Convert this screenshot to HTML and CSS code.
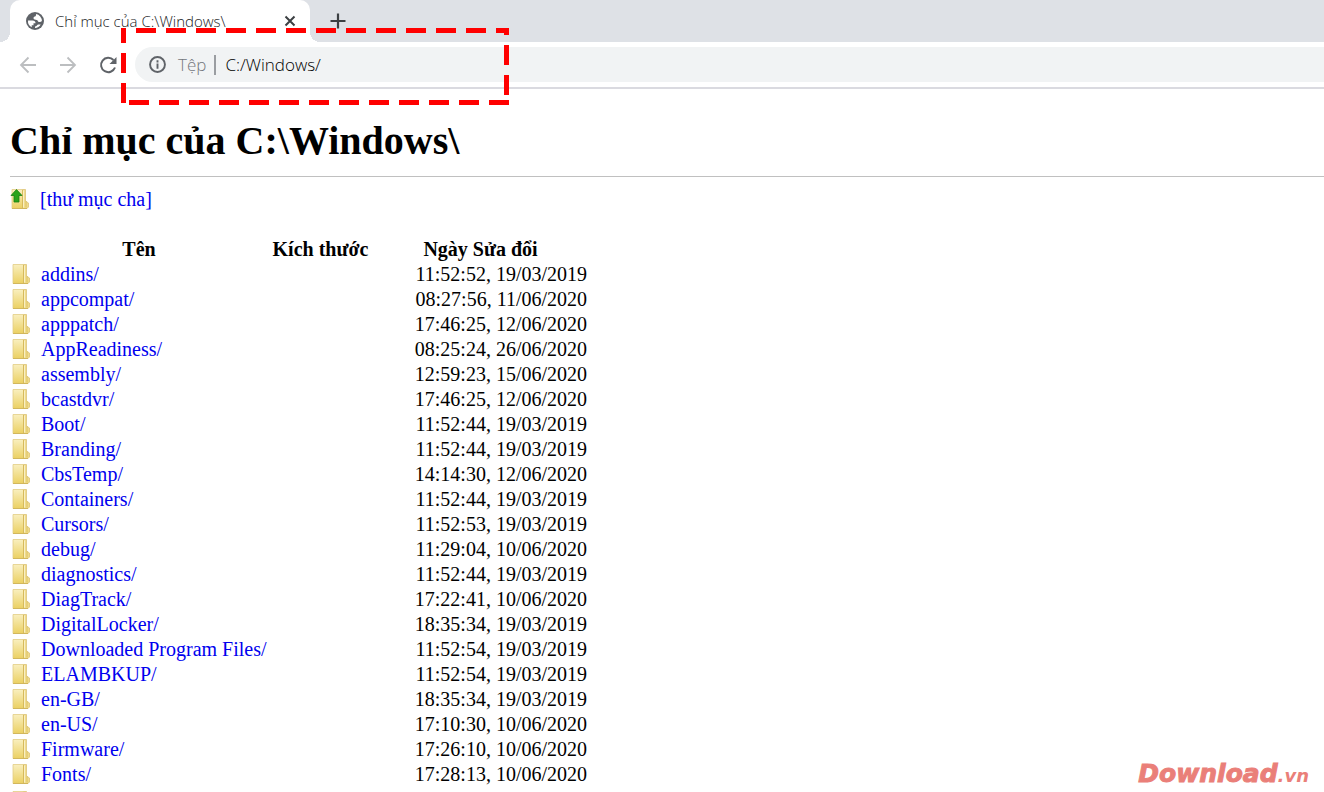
FILE: index.html
```html
<!DOCTYPE html>
<html lang="vi">
<head>
<meta charset="utf-8">
<title>Chỉ mục của C:\Windows\</title>
<link rel="stylesheet" href="styles.css">
</head>
<body>
<svg class="defs" aria-hidden="true">
  <defs>
    <linearGradient id="gold" x1="0" y1="0" x2="0" y2="1">
      <stop offset="0" stop-color="#f9efbf"/>
      <stop offset="1" stop-color="#ebd062"/>
    </linearGradient>
    <symbol id="folder" viewBox="0 0 20 20">
      <path d="M12 .5h3.500V12l3 2V18l-1.500 1.500H12z" fill="#f0dc8c" stroke="#dcc377" stroke-width=".8"/>
      <path d="M2 .5h10.500v19H2z" fill="url(#gold)" stroke="#e2cd85" stroke-width=".8"/>
      <path d="M12.500 1v18" stroke="#d6ba5c" fill="none"/>
      <path d="M13.500 1.500v17" stroke="#f9efc4" fill="none"/>
      <path d="M16 12v6.500" stroke="#d6ba5c" stroke-width=".8" fill="none"/>
      <path d="M2 19.500h15" stroke="#cdb052" stroke-width=".8"/>
    </symbol>
  </defs>
</svg>
<div class="browser">
  <header class="chrome">
    <div class="tabs">
      <div class="tab">
        <svg class="globe" viewBox="0 0 18 18" aria-hidden="true">
          <circle cx="9" cy="9" r="9" fill="#5f6368"/>
          <path d="M2 8.500h4.500c2 0 3 1 3 2.800h-2v2h-1.800V15.300A7 7 0 0 1 2 8.500zM10 2.100a7 7 0 0 1 5.900 6.900c-.7 1-2 1.300-3.200.9-1-.4-1-1.700-1.900-1.900-1.500-.2-3.300-.2-3.300-1.700 0-1.600 1.200-1.500 2-2 .6-.5.500-1.400.5-2.200zM9 16v-1.500c1.500-.3 2-1.300 3-2h2.700C13.500 14.700 11.500 16 9 16z" fill="#fff"/>
        </svg>
        <span class="tab-title">Chỉ mục của C:\Windows\</span>
        <button class="close" aria-label="Đóng"><svg viewBox="0 0 12 12"><path d="M1.500 1.500l9 9m0-9l-9 9" stroke="#3c4043" stroke-width="2"/></svg></button>
      </div>
      <button class="new-tab" aria-label="Thẻ mới"><svg viewBox="0 0 16 16"><path d="M8 .5v15M.5 8h15" stroke="#3c4043" stroke-width="2.200"/></svg></button>
    </div>
    <div class="toolbar">
      <button class="nav" aria-label="Quay lại" disabled><svg viewBox="0 0 18 18"><path d="M17 9H2m7.500-7.500L2 9l7.500 7.500" fill="none" stroke="#bcbec0" stroke-width="1.800"/></svg></button>
      <button class="nav" aria-label="Tiến" disabled><svg viewBox="0 0 18 18"><path d="M1 9h15M8.500 1.500L16 9l-7.500 7.500" fill="none" stroke="#bcbec0" stroke-width="1.800"/></svg></button>
      <button class="nav" aria-label="Tải lại"><svg viewBox="0 0 18 18"><path d="M16 11.500A7.200 7.200 0 1 1 14.500 4" fill="none" stroke="#5f6368" stroke-width="2"/><path d="M17.500 1v7H10.500z" fill="#5f6368"/></svg></button>
      <div class="omnibox">
        <svg class="info" viewBox="0 0 16 16" aria-hidden="true"><circle cx="8" cy="8" r="7" fill="none" stroke="#5f6368" stroke-width="1.800"/><path d="M8 7v5M8 4v2" stroke="#5f6368" stroke-width="1.800"/></svg>
        <label class="scheme" for="url">Tệp</label>
        <input class="url" id="url" type="text" value="C:/Windows/">
      </div>
    </div>
    <svg class="highlight" viewBox="0 0 388 77" aria-hidden="true">
      <g stroke="#f00" stroke-width="5" stroke-dasharray="20 10">
        <path d="M15 2.500H388"/>
        <path d="M385.500 0V77" stroke-dashoffset="13"/>
        <path d="M8 74.500H388"/>
        <path d="M2.500 0V75" stroke-dashoffset="5"/>
      </g>
    </svg>
  </header>
  <main class="page">
    <h1>Chỉ mục của C:\Windows\</h1>
    <a class="parent" href="#"><svg class="icon" viewBox="0 0 20 20" aria-hidden="true"><use href="#folder"/><path d="M6.500 .5L12 6.500H9V13H4V6.500H1z" fill="#2ba31a" stroke="#168011" stroke-width=".8"/></svg>[thư mục cha]</a>
    <table>
      <colgroup><col class="col-name"><col class="col-size"><col class="col-date"></colgroup>
      <thead><tr><th>Tên</th><th>Kích thước</th><th>Ngày Sửa đổi</th></tr></thead>
      <tbody id="rows"></tbody>
    </table>
  </main>
  <div class="watermark">Download<span>.vn</span></div>
</div>
<script src="listing.js"></script>
</body>
</html>
```
FILE: listing.js
```js
const entries = [
  ["addins/", "11:52:52, 19/03/2019"],
  ["appcompat/", "08:27:56, 11/06/2020"],
  ["apppatch/", "17:46:25, 12/06/2020"],
  ["AppReadiness/", "08:25:24, 26/06/2020"],
  ["assembly/", "12:59:23, 15/06/2020"],
  ["bcastdvr/", "17:46:25, 12/06/2020"],
  ["Boot/", "11:52:44, 19/03/2019"],
  ["Branding/", "11:52:44, 19/03/2019"],
  ["CbsTemp/", "14:14:30, 12/06/2020"],
  ["Containers/", "11:52:44, 19/03/2019"],
  ["Cursors/", "11:52:53, 19/03/2019"],
  ["debug/", "11:29:04, 10/06/2020"],
  ["diagnostics/", "11:52:44, 19/03/2019"],
  ["DiagTrack/", "17:22:41, 10/06/2020"],
  ["DigitalLocker/", "18:35:34, 19/03/2019"],
  ["Downloaded Program Files/", "11:52:54, 19/03/2019"],
  ["ELAMBKUP/", "11:52:54, 19/03/2019"],
  ["en-GB/", "18:35:34, 19/03/2019"],
  ["en-US/", "17:10:30, 10/06/2020"],
  ["Firmware/", "17:26:10, 10/06/2020"],
  ["Fonts/", "17:28:13, 10/06/2020"],
  ["", ""]
];
document.getElementById("rows").innerHTML = entries.map(([name, date]) =>
  `<tr><td><a class="entry" href="#"><svg class="icon" viewBox="0 0 20 20" aria-hidden="true"><use href="#folder"/></svg>${name}</a></td><td></td><td>${date}</td></tr>`
).join("");
```
FILE: styles.css
```css
* { box-sizing: border-box; }
body { margin: 0; background: #fff; color: #000; font: 20px/25px "Liberation Serif", "Times New Roman", serif; }
button { display: flex; padding: 0; border: 0; background: none; }
.defs { position: absolute; width: 0; height: 0; }
.browser { position: relative; height: 100vh; overflow: hidden; }
.chrome { position: relative; font-family: "Open Sans", "Noto Sans", sans-serif; font-weight: 300; border-bottom: 2px solid #dadae0; }
.tabs { display: flex; height: 42px; padding-left: 10px; background: #dee1e6; }
.tab { position: relative; display: flex; align-items: center; width: 300px; padding: 0 14px 0 16px; background: #fff; border-radius: 10px 10px 0 0; }
.tab::before, .tab::after { content: ""; position: absolute; bottom: 0; width: 10px; height: 10px; }
.tab::before { right: 100%; background: radial-gradient(circle at 0 0, #dee1e6 10px, #fff 10px); }
.tab::after { left: 100%; background: radial-gradient(circle at 100% 0, #dee1e6 10px, #fff 10px); }
.globe { width: 18px; height: 18px; margin-right: 11px; }
.tab-title { flex: 1; font-size: 15px; color: #202124; white-space: nowrap; }
.close svg { width: 12px; height: 12px; }
.new-tab { align-items: center; margin-left: 20px; }
.new-tab svg { width: 16px; height: 16px; }
.toolbar { display: flex; align-items: center; height: 45px; padding-left: 19px; gap: 22px; }
.nav svg { width: 18px; height: 18px; }
.omnibox { flex: 1; display: flex; align-items: center; height: 35px; margin-left: -4px; padding-left: 14px; background: #f1f3f4; border-radius: 18px 0 0 18px; font-size: 17px; }
.info { width: 17px; height: 17px; margin-right: 12px; }
.scheme { padding-right: 8px; border-right: 2px solid #9a9da1; line-height: 20px; color: #73777c; }
.url { flex: 1; min-width: 0; padding: 0 0 0 9px; border: 0; outline: 0; background: none; font: inherit; color: #000; }
.highlight { position: absolute; left: 121px; top: 28px; width: 388px; height: 77px; z-index: 1; }
.page { padding: 27px 0 0 10px; }
h1 { margin: 0 0 10px; padding-bottom: 10px; border-bottom: 1px solid #c0c0c0; font-size: 40px; line-height: 50px; }
a { color: #00e; text-decoration: none; }
.parent, .entry { display: flex; align-items: flex-start; gap: 10px; white-space: nowrap; }
.parent { height: 25px; margin-bottom: 25px; }
.icon { width: 20px; height: 20px; margin-top: 2px; flex: none; }
table { table-layout: fixed; width: 576px; margin-left: 1px; border-spacing: 0; }
td, th { height: 25px; padding: 0; white-space: nowrap; }
td:last-child { text-align: right; }
.col-name { width: 256px; }
.col-size { width: 107px; }
.watermark { position: absolute; right: 15px; bottom: 4px; color: #ea7f79; font: italic bold 25px/24px "DejaVu Sans", sans-serif; -webkit-text-stroke: 1px #ea7f79; }
.watermark span { font-size: 18px; -webkit-text-stroke: 0; }
```
